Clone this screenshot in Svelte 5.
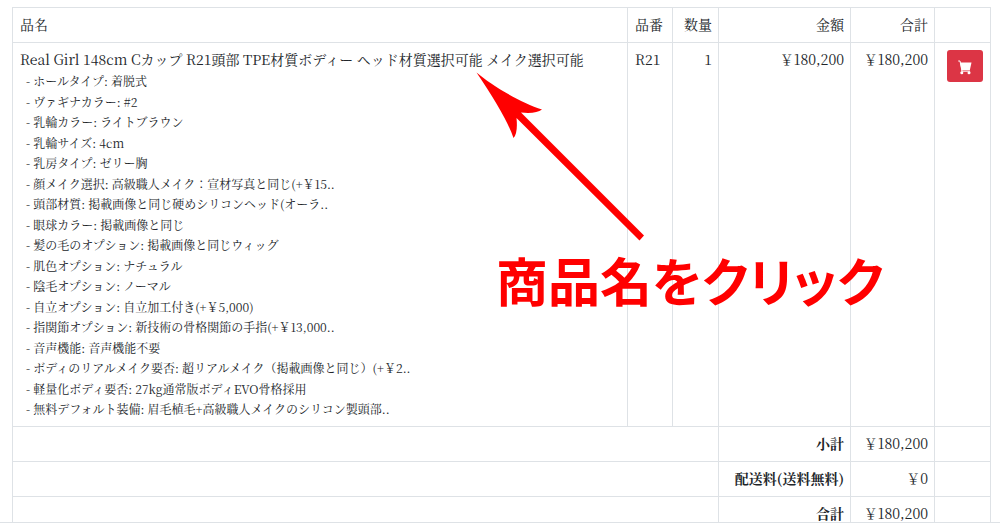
<script>
	const options = [
		['ホールタイプ', '着脱式'],
		['ヴァギナカラー', '#2'],
		['乳輪カラー', 'ライトブラウン'],
		['乳輪サイズ', '4cm'],
		['乳房タイプ', 'ゼリー胸'],
		['顔メイク選択', '高級職人メイク：宣材写真と同じ(+￥15..'],
		['頭部材質', '掲載画像と同じ硬めシリコンヘッド(オーラ..'],
		['眼球カラー', '掲載画像と同じ'],
		['髪の毛のオプション', '掲載画像と同じウィッグ'],
		['肌色オプション', 'ナチュラル'],
		['陰毛オプション', 'ノーマル'],
		['自立オプション', '自立加工付き(+￥5,000)'],
		['指関節オプション', '新技術の骨格関節の手指(+￥13,000..'],
		['音声機能', '音声機能不要'],
		['ボディのリアルメイク要否', '超リアルメイク（掲載画像と同じ）(+￥2..'],
		['軽量化ボディ要否', '27kg通常版ボディEVO骨格採用'],
		['無料デフォルト装備', '眉毛植毛+高級職人メイクのシリコン製頭部..']
	];

	const totals = [
		{ label: '小計', value: '￥180,200' },
		{ label: '配送料(送料無料)', value: '￥0' },
		{ label: '合計', value: '￥180,200' }
	];
</script>

<div class="page">
	<main class="order">
		<table>
			<colgroup>
				<col />
				<col class="col-model" />
				<col class="col-qty" />
				<col class="col-price" />
				<col class="col-total" />
				<col class="col-action" />
			</colgroup>
			<thead>
				<tr>
					<th scope="col">品名</th>
					<th scope="col">品番</th>
					<th scope="col" class="num">数量</th>
					<th scope="col" class="num">金額</th>
					<th scope="col" class="num">合計</th>
					<td></td>
				</tr>
			</thead>
			<tbody>
				<tr>
					<td>
						<a class="product" href="#product">Real Girl 148cm Cカップ R21頭部 TPE材質ボディー ヘッド材質選択可能 メイク選択可能</a>
						<ul class="options">
							{#each options as [name, value]}
								<li>- {name}: {value}</li>
							{/each}
						</ul>
					</td>
					<td>R21</td>
					<td class="num">1</td>
					<td class="num">￥180,200</td>
					<td class="num">￥180,200</td>
					<td class="action">
						<button type="button" aria-label="カートに入れる">
							<svg width="14" height="15" viewBox="0 0 14 15" aria-hidden="true">
								<path
									d="M0.6 1H2L4 11.2M11.7 11.2H4"
									fill="none"
									stroke="#fff"
									stroke-linejoin="round"
									stroke-linecap="round"
								/>
								<path d="M2 2.5H13.5L11.8 10.2H3.6Z" fill="#fff" />
								<circle cx="3.8" cy="12.8" r="1.5" fill="#fff" />
								<circle cx="11" cy="12.8" r="1.5" fill="#fff" />
							</svg>
						</button>
					</td>
				</tr>
			</tbody>
			<tfoot>
				{#each totals as row}
					<tr>
						<td colspan="3"></td>
						<th scope="row" class="num sum">{row.label}</th>
						<td class="num">{row.value}</td>
						<td></td>
					</tr>
				{/each}
			</tfoot>
		</table>
	</main>

	<!-- Callout laid over the table -->
	<svg class="arrow" width="168" height="170" viewBox="0 0 168 170" aria-hidden="true">
		<path
			d="M0.5 0.5C15 13 45 31 66 37.5Q60 42 45 40.5L168 163.5L163.5 168.5L40.5 46Q42 61 37.5 66Q30 44 0.5 0.5Z"
			fill="#f00"
		/>
	</svg>
	<p class="callout">商品名をクリック</p>
</div>

<style>
	:global(body) {
		margin: 0;
		background: #fff;
	}

	.page {
		position: relative;
		display: flex;
		flex-direction: column;
		box-sizing: border-box;
		height: 100vh;
		padding-bottom: 1px;
		color: #212529;
		font-family: 'Noto Serif CJK JP', 'Noto Serif JP', 'Liberation Serif', 'Noto Sans CJK JP', serif;
		font-size: 14px;
		line-height: 20px;
	}

	.order {
		flex: 1;
		min-height: 0;
		overflow: hidden;
		padding: 7px 9px 0 12px;
		border-bottom: 1px solid #dee2e6;
	}

	table {
		width: 100%;
		table-layout: fixed;
		border-collapse: collapse;
	}

	.col-model {
		width: 45px;
	}

	.col-qty {
		width: 46px;
	}

	.col-price {
		width: 132px;
	}

	.col-total {
		width: 84px;
	}

	.col-action {
		width: 56px;
	}

	th,
	td {
		height: 21px;
		padding: 6px 6px 7px 7px;
		border: 1px solid #dee2e6;
		font-weight: 400;
		text-align: left;
		vertical-align: top;
		white-space: nowrap;
	}

	.num {
		text-align: right;
	}

	.sum {
		font-weight: 700;
	}

	.product {
		display: block;
		color: inherit;
		text-decoration: none;
	}

	.options {
		display: flex;
		flex-direction: column;
		justify-content: space-between;
		min-height: 348px;
		margin: 2px 0 0;
		padding: 0 0 0 6px;
		list-style: none;
		font-size: 12px;
	}

	.action {
		padding: 7px;
		text-align: right;
	}

	button {
		display: inline-flex;
		align-items: center;
		justify-content: center;
		width: 36px;
		height: 32px;
		padding: 2px 0 0;
		border: 0;
		border-radius: 3px;
		background: #dc3545;
		cursor: pointer;
	}

	.arrow {
		position: absolute;
		top: 72px;
		left: 476px;
	}

	.callout {
		position: absolute;
		top: 244px;
		left: 496px;
		margin: 0;
		color: #f00;
		font-family: 'Noto Sans CJK JP', sans-serif;
		font-size: 52px;
		font-weight: 700;
		font-feature-settings: 'palt';
		line-height: 72px;
		white-space: nowrap;
	}
</style>
